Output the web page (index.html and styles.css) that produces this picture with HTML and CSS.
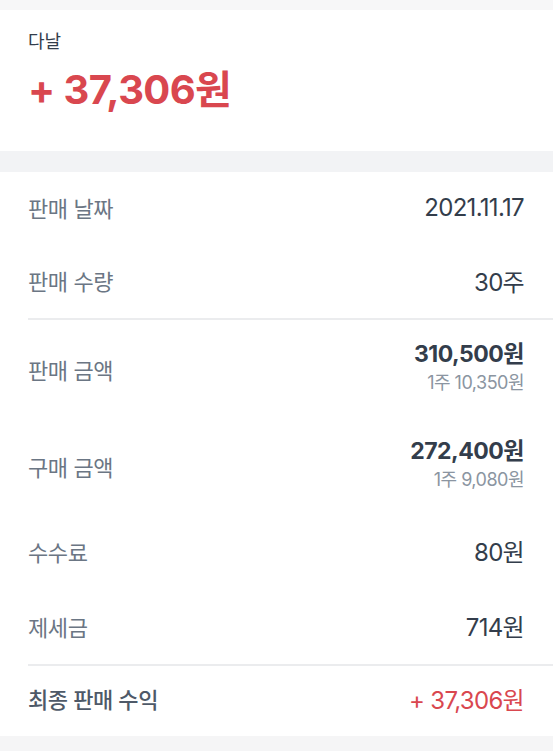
FILE: index.html
```html
<!DOCTYPE html>
<html lang="ko">
<head>
<meta charset="utf-8">
<link rel="stylesheet" href="styles.css">
</head>
<body>
<div class="top-gap"></div>
<section class="summary">
  <div class="summary-name">다날</div>
  <div class="summary-amount">+ 37,306원</div>
</section>
<div class="band"></div>
<section class="card">
  <div class="row row-short">
    <span class="label">판매 날짜</span>
    <span class="value">2021.11.17</span>
  </div>
  <div class="row row-short">
    <span class="label">판매 수량</span>
    <span class="value">30주</span>
  </div>
  <div class="divider"></div>
  <div class="row row-tall">
    <span class="label">판매 금액</span>
    <div class="value-stack">
      <span class="value-strong">310,500원</span>
      <span class="value-sub">1주 10,350원</span>
    </div>
  </div>
  <div class="row row-tall">
    <span class="label">구매 금액</span>
    <div class="value-stack">
      <span class="value-strong">272,400원</span>
      <span class="value-sub">1주 9,080원</span>
    </div>
  </div>
  <div class="row row-mid">
    <span class="label">수수료</span>
    <span class="value">80원</span>
  </div>
  <div class="row row-mid">
    <span class="label">제세금</span>
    <span class="value">714원</span>
  </div>
  <div class="divider"></div>
  <div class="row row-final">
    <span class="label label-strong">최종 판매 수익</span>
    <span class="value value-red">+ 37,306원</span>
  </div>
</section>
<div class="bottom-gap"></div>
</body>
</html>
```

FILE: styles.css
```css
* { box-sizing: border-box; }
html, body {
  margin: 0;
  padding: 0;
  background: #ffffff;
  font-family: Inter, "Noto Sans CJK KR", sans-serif;
  color: #333d4b;
}
.top-gap {
  height: 10px;
  background: #f7f7f8;
}
.summary {
  height: 141px;
  padding: 20px 28px 0;
  background: #fff;
}
.summary-name {
  font-size: 18px;
  line-height: 24px;
  color: #333d4b;
}
.summary-amount {
  margin-top: 12px;
  font-size: 40px;
  line-height: 48px;
  font-weight: 700;
  color: #d9474f;
  letter-spacing: -0.6px;
}
.band {
  height: 21px;
  background: #f2f3f5;
}
.card {
  background: #fff;
}
.row {
  display: flex;
  justify-content: space-between;
  align-items: center;
  padding: 0 29px 0 28px;
}
.row-short { height: 73px; padding-bottom: 3px; }
.row-tall { height: 97px; }
.row-mid { height: 75px; padding-bottom: 2px; }
.row-final { height: 70px; padding-bottom: 6px; }
.divider {
  height: 2px;
  margin-left: 28px;
  background: #ebecee;
}
.label {
  font-size: 22px;
  color: #6b7684;
  letter-spacing: -0.4px;
}
.label-strong {
  color: #4e5968;
  font-weight: 500;
}
.value {
  font-size: 24px;
  color: #333d4b;
  letter-spacing: -0.7px;
}
.value-red { color: #d9474f; }
.value-stack {
  display: flex;
  flex-direction: column;
  align-items: flex-end;
  gap: 4px;
  padding-bottom: 4px;
}
.value-strong {
  font-size: 23px;
  font-weight: 700;
  color: #333d4b;
  letter-spacing: -0.5px;
  line-height: 28px;
}
.value-sub {
  font-size: 18px;
  color: #8b95a1;
  letter-spacing: -0.5px;
  line-height: 22px;
}
.bottom-gap {
  height: 15px;
  background: #f5f5f6;
}
```
